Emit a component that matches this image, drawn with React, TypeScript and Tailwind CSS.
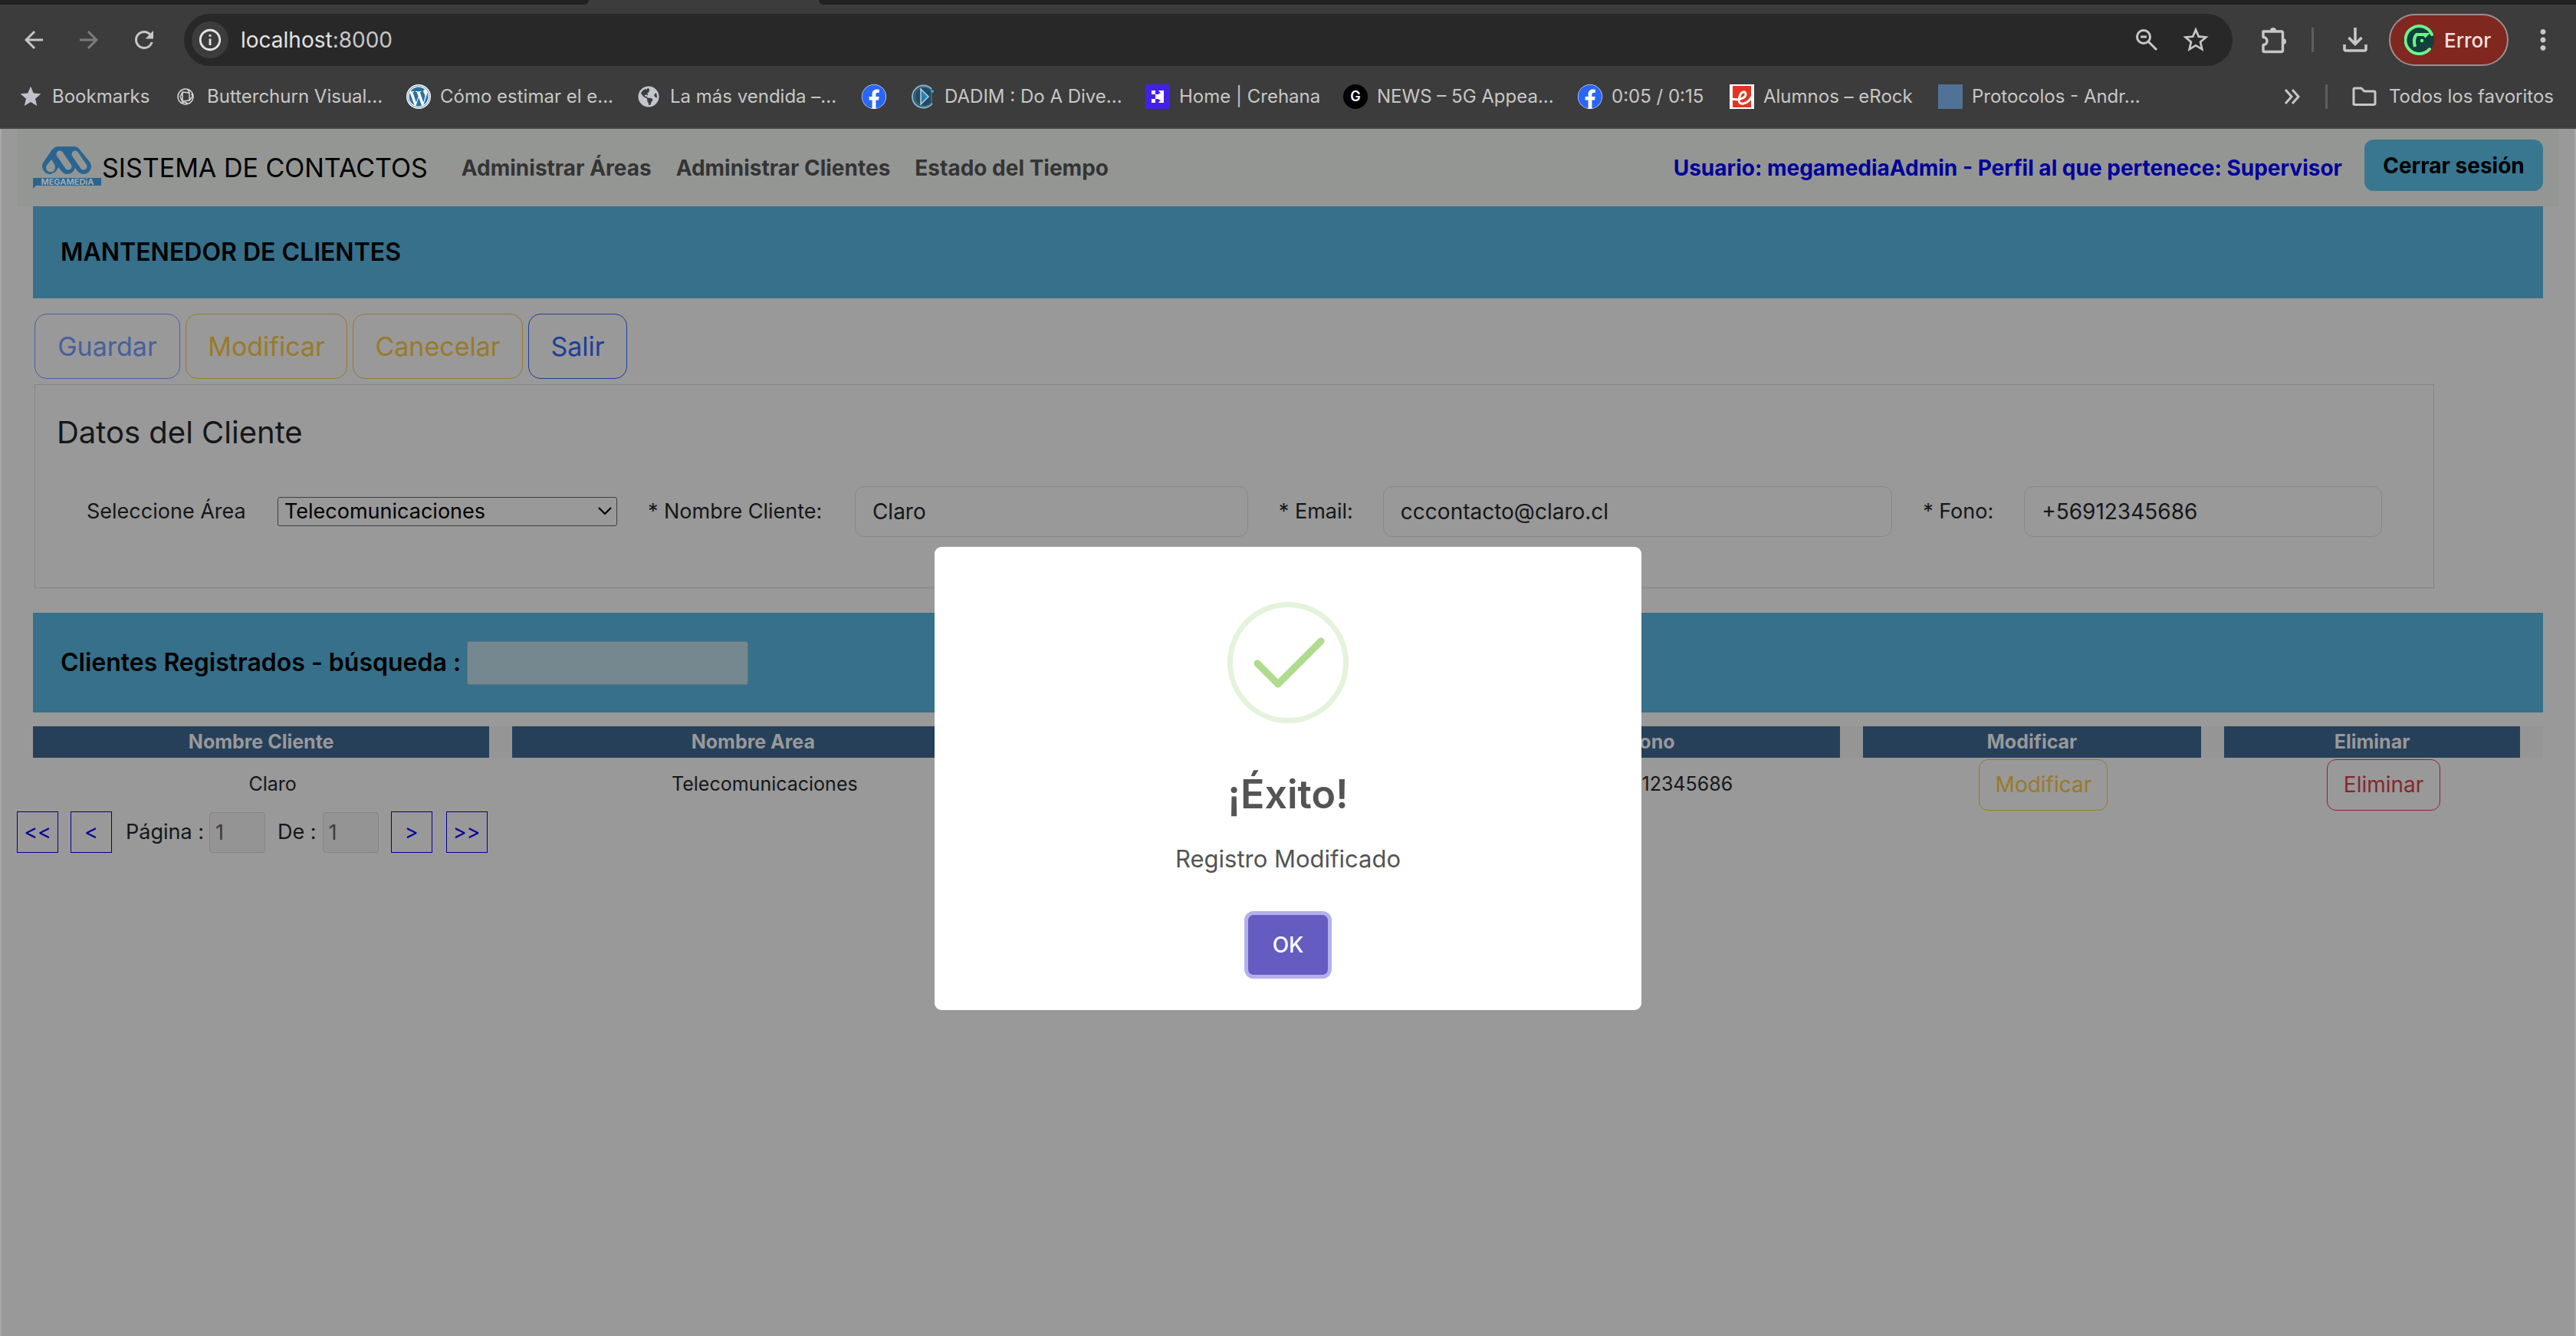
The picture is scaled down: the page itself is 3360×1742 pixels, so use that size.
import React from "react";
import { MdArrowBack, MdArrowForward, MdRefresh, MdInfoOutline, MdStar, MdStarBorder, MdMoreVert } from "react-icons/md";
import { FaFacebook, FaGlobeAmericas, FaWordpress } from "react-icons/fa";

function ZoomOutIcon() {
  return (
    <svg viewBox="0 0 32 32" className="size-8" fill="none" stroke="#c7c7c7" strokeWidth="3">
      <circle cx="12" cy="12" r="8.5" />
      <path d="M8 12h8M18.5 18.5 29 29" />
    </svg>
  );
}

function PuzzleIcon() {
  return (
    <svg viewBox="0 0 36 36" className="size-9" fill="none" stroke="#c7c7c7" strokeWidth="3.4" strokeLinejoin="round">
      <path d="M4 7h24a1.500 1.500 0 0 1 1.500 1.500V32a1.500 1.500 0 0 1-1.500 1.500H5.500A1.500 1.500 0 0 1 4 32v-7.500c3 0 5-2 5-5s-2-5-5-5z" />
      <path d="M13 6a4 4 0 0 1 8 0zM30 16a4 4 0 0 1 0 8z" fill="#c7c7c7" stroke="none" />
    </svg>
  );
}

function DownloadIcon() {
  return (
    <svg viewBox="0 0 32 32" className="size-8" fill="none" stroke="#c7c7c7" strokeWidth="3.6">
      <path d="M16 0v21M7.500 13l8.500 8.500L24.500 13M2 22v6a2 2 0 0 0 2 2h24a2 2 0 0 0 2-2v-6" />
    </svg>
  );
}

function FolderIcon() {
  return (
    <svg viewBox="0 0 32 32" className="size-8" fill="none" stroke="#c7c7c7" strokeWidth="3" strokeLinejoin="round">
      <path d="M2 26V6.500A1.500 1.500 0 0 1 3.500 5H12l4 4h12.500A1.500 1.500 0 0 1 30 10.500V25a1.500 1.500 0 0 1-1.500 1.500H3.500A1.500 1.500 0 0 1 2 25z" />
    </svg>
  );
}

function ProfileIcon() {
  return (
    <svg viewBox="0 0 40 40" className="size-10" fill="none">
      <circle cx="20" cy="20" r="19" fill="#12403c" />
      <path d="M36 13A18 18 0 1 0 33 32" stroke="#6bf58b" strokeWidth="4" strokeLinecap="round" />
      <path d="M14 29c-2-8-1-13 2-16h13l-3 3" stroke="#6bf58b" strokeWidth="4" />
      <circle cx="23" cy="21" r="2.200" fill="#6bf58b" />
    </svg>
  );
}

function KnotIcon() {
  return (
    <svg viewBox="0 0 32 32" className="size-8" fill="none" stroke="#d8d8d8" strokeWidth="1.500">
      <circle cx="16" cy="16" r="10" />
      <path d="M12 10l9 1v10l-9 1zM12 10l-3 6 4 9M21 11l-2-4M21 21l4-5-1-4M12 22l7 3" />
    </svg>
  );
}

function PlayIcon() {
  return (
    <svg viewBox="0 0 32 32" className="size-8" fill="none">
      <path d="M28 25A14.500 14.500 0 1 1 27 6" stroke="#7fb6d8" strokeWidth="2" />
      <path d="M27 24A12.500 12.500 0 1 1 27 8z" fill="#254a60" stroke="#4c87ab" strokeWidth="1" />
      <path d="M13 6v20l10-10z" fill="#2d7fb0" stroke="#a6d4ee" strokeWidth="1.500" />
      <circle cx="28" cy="9" r="2" fill="#3b9fe0" />
    </svg>
  );
}

function CrehanaIcon() {
  return (
    <svg viewBox="0 0 32 32" className="size-8">
      <path d="M0 0h32v32H0z" fill="#4321e6" />
      <path d="M8 8h5v5h4V8h7v16h-7v-5h-4v5H8v-5h5v-6H8z" fill="#fff" />
      <path d="M17 8l3 4h-3zM17 24l3-4h-3z" fill="#4321e6" />
    </svg>
  );
}

function Facebook() {
  return (
    <span className="flex size-8 items-center justify-center rounded-full bg-white">
      <FaFacebook className="size-8 text-[#2a66f6]" />
    </span>
  );
}

const bookmarks: { name: string; label: string; width: string; icon: React.ReactNode }[] = [
  { name: "bookmarks", label: "Bookmarks", width: "w-[158px]", icon: <MdStar className="size-8 text-[#bfc2cb]" /> },
  { name: "butterchurn", label: "Butterchurn Visual...", width: "w-[260px]", icon: <KnotIcon /> },
  {
    name: "wordpress",
    label: "Cómo estimar el e...",
    width: "w-[256px]",
    icon: (
      <span className="flex size-8 items-center justify-center rounded-full bg-white">
        <FaWordpress className="size-[30px] text-[#2a719f]" />
      </span>
    ),
  },
  {
    name: "vendida",
    label: "La más vendida –...",
    width: "w-[250px]",
    icon: (
      <span className="flex size-8 items-center justify-center">
        <FaGlobeAmericas className="size-7 text-[#c2c5cd]" />
      </span>
    ),
  },
  { name: "facebook", label: "", width: "w-[20px]", icon: <Facebook /> },
  { name: "dadim", label: "DADIM : Do A Dive...", width: "w-[262px]", icon: <PlayIcon /> },
  { name: "crehana", label: "Home | Crehana", width: "w-[214px]", icon: <CrehanaIcon /> },
  {
    name: "news",
    label: "NEWS – 5G Appea...",
    width: "w-[262px]",
    icon: <span className="flex size-8 items-center justify-center rounded-full bg-black text-[18px] font-semibold text-white">G</span>,
  },
  { name: "video", label: "0:05 / 0:15", width: "w-[154px]", icon: <Facebook /> },
  {
    name: "erock",
    label: "Alumnos – eRock",
    width: "w-[228px]",
    icon: (
      <svg viewBox="0 0 32 32" className="size-8">
        <path d="M0 0h32v32H0z" fill="#fff" />
        <path d="M4 2h24v28H4z" fill="#e5331f" />
        <path d="M3 19c9 2 18-1 18-6s-6-4-8 3 0 10 5 9 9-5 11-9" fill="none" stroke="#fff" strokeWidth="3" />
      </svg>
    ),
  },
  { name: "protocolos", label: "Protocolos - Andr...", width: "w-[260px]", icon: <span className="size-8 bg-[#527196]" /> },
];

function Browser() {
  return (
    <div className="border-b-2 border-[#454746] bg-[#3c3c3c] text-[#c7c7c7]">
      <div className="flex h-[6px]">
        <div className="w-[768px] rounded-br-lg bg-[#202221]" />
        <div className="ml-[300px] flex-1 rounded-bl-lg bg-[#202221]" />
      </div>
      <div className="flex h-[92px] items-center pr-[22px] pl-[26px]">
        <button aria-label="Atrás" className="mr-9"><MdArrowBack className="size-9" /></button>
        <button aria-label="Adelante" className="mr-9"><MdArrowForward className="size-9 text-[#7c7c7c]" /></button>
        <button aria-label="Recargar" className="mr-[34px]"><MdRefresh className="size-9" /></button>
        <div className="flex h-[68px] flex-1 items-center rounded-full bg-[#282828] pr-7 pl-[10px]">
          <button aria-label="Información del sitio" className="mr-4 flex size-12 items-center justify-center rounded-full bg-[#3c3c3c]">
            <MdInfoOutline className="size-[34px] text-[#e3e3e3]" />
          </button>
          <a href="#url" className="flex-1 text-[28px] leading-9">
            <span className="text-[#e3e3e3]">localhost</span>:8000
          </a>
          <button aria-label="Zoom" className="mr-7"><ZoomOutIcon /></button>
          <button aria-label="Favorito"><MdStarBorder className="size-10" /></button>
        </div>
        <div className="flex items-center pl-9">
          <button aria-label="Extensiones" className="mr-[31px]"><PuzzleIcon /></button>
          <div className="mr-[38px] h-8 w-[3px] bg-[#5e5e5e]" />
          <button aria-label="Descargas" className="mr-7"><DownloadIcon /></button>
          <button className="mr-6 flex h-[68px] w-[156px] items-center gap-3 rounded-full border-2 border-[#9c8f8d] bg-[#802720] pl-[18px] text-[26px] font-medium text-[#f7dfdc]">
            <ProfileIcon />
            Error
          </button>
          <button aria-label="Menú"><MdMoreVert className="size-[42px]" /></button>
        </div>
      </div>
      <nav className="flex h-[68px] items-center pr-[29px] pb-3 pl-6 text-[24px] leading-8 whitespace-nowrap">
        {bookmarks.map((b) => (
          <a key={b.name} href={"#" + b.name} aria-label={b.name} className="flex items-center gap-3">
            {b.icon}
            <span className={b.width}>{b.label}</span>
          </a>
        ))}
        <button aria-label="Más favoritos" className="ml-auto">
          <svg viewBox="0 0 22 22" className="size-[22px]" fill="none" stroke="#c7c7c7" strokeWidth="3">
            <path d="M2 2l8 9-8 9M11 2l8 9-8 9" />
          </svg>
        </button>
        <div className="mr-8 ml-8 h-8 w-[3px] bg-[#5e5e5e]" />
        <a href="#todos" className="flex items-center gap-4">
          <FolderIcon />
          Todos los favoritos
        </a>
      </nav>
    </div>
  );
}

function Logo() {
  return (
    <svg viewBox="0 0 90 56" className="h-14 w-[90px]" fill="none" strokeLinecap="round" strokeLinejoin="round">
      <path d="M22 26 33 10 45 26M53 10 66 26M33 10h20" stroke="#2a6591" strokeWidth="20" />
      <path d="M35 10 46 26M55 10 66 26" stroke="#949694" strokeWidth="9" />
      <path d="M24 17c4 6 5 8 5 10a6 6 0 0 1-12 1c0-3 3-6 7-11z" fill="#949694" />
      <path d="M0 41h89v10H4l-4 4z" fill="#2a6591" />
      <text x="45" y="50" textAnchor="middle" fontSize="11" fontWeight="700" fill="#a4acaf">MEGAMEDiA</text>
    </svg>
  );
}

function Header() {
  return (
    <header className="mx-5 flex h-[101px] items-center bg-[#949694] pr-[21px] pl-[21px] whitespace-nowrap">
      <a href="#inicio" className="flex items-center text-[34px] text-black">
        <Logo />
        SISTEMA DE CONTACTOS
      </a>
      <nav className="ml-11 flex gap-8 text-[28px] font-bold text-[#343434]">
        <a href="#areas">Administrar Áreas</a>
        <a href="#clientes">Administrar Clientes</a>
        <a href="#tiempo">Estado del Tiempo</a>
      </nav>
      <span className="ml-auto text-[28px] font-bold text-[#00009a]">
        Usuario: megamediaAdmin - Perfil al que pertenece: Supervisor
      </span>
      <button className="mb-[6px] ml-[29px] h-[67px] w-[233px] rounded-xl bg-[#397790] text-[28px] font-bold text-black">
        Cerrar sesión
      </button>
    </header>
  );
}

const inputStyle = "h-[66px] min-w-0 rounded-xl border border-[#888888] bg-[#999999] px-[22px] text-[28px] text-[#151719]";

function ClientForm() {
  return (
    <form className="mr-[142px] ml-[2px] mt-[7px] h-[266px] border border-[#858585] pt-9">
      <h2 className="pl-7 text-[40px] leading-[52px] text-[#151719]">Datos del Cliente</h2>
      <div className="mt-11 flex items-center gap-10 px-[67px] text-[27px] whitespace-nowrap text-[#151719]">
        <label htmlFor="area" className="w-[209px]">Seleccione Área</label>
        <div className="relative flex-[442]">
          <select id="area" className="h-[38px] w-full appearance-none rounded-[3px] border border-[#3f3f3f] bg-[#999999] pl-2 text-[27px] leading-8 text-black">
            <option>Telecomunicaciones</option>
          </select>
          <svg viewBox="0 0 18 12" className="pointer-events-none absolute top-[14px] right-[7px] h-3 w-[18px]" fill="none" stroke="#000" strokeWidth="2.200">
            <path d="M1 1l8 8 8-8" />
          </svg>
        </div>
        <label htmlFor="nombre" className="w-[230px]">* Nombre Cliente:</label>
        <input id="nombre" defaultValue="Claro" className={inputStyle + " flex-[466]"} />
        <label htmlFor="email" className="w-[96px]">* Email:</label>
        <input id="email" defaultValue="cccontacto@claro.cl" className={inputStyle + " flex-[617]"} />
        <label htmlFor="fono" className="w-[92px]">* Fono:</label>
        <input id="fono" defaultValue="+56912345686" className={inputStyle + " flex-[420]"} />
      </div>
    </form>
  );
}

const columns = [
  { title: "Nombre Cliente", width: "w-[19.1%]" },
  { title: "Nombre Area", width: "w-[20.1%]" },
  { title: "Email", width: "w-[17.8%]" },
  { title: "Fono", width: "w-[15.9%]" },
  { title: "Modificar", width: "w-[14.4%]" },
  { title: "Eliminar", width: "w-[12.7%]" },
];

function ClientTable() {
  return (
    <table className="mt-[18px] w-full table-fixed border-collapse text-center text-[25px] text-[#151719]">
      <thead>
        <tr className="bg-[#959595]">
          {columns.map((c) => (
            <th key={c.title} scope="col" className={"p-0 " + c.width}>
              <div className="mr-[30px] h-[41px] bg-[#27405a] leading-[41px] font-bold text-[#999999]">{c.title}</div>
            </th>
          ))}
        </tr>
      </thead>
      <tbody>
        <tr className="h-[70px]">
          <td>Claro</td>
          <td>Telecomunicaciones</td>
          <td />
          <td>+56912345686</td>
          <td>
            <button className="h-[67px] w-[168px] rounded-xl border border-[#997a2a] text-[28px] text-[#997a2a]">Modificar</button>
          </td>
          <td>
            <button className="h-[67px] w-[148px] rounded-xl border border-[#84272f] text-[28px] text-[#84272f]">Eliminar</button>
          </td>
        </tr>
      </tbody>
    </table>
  );
}

const pageButton = "h-[54px] w-[54px] border border-[#00009a] text-[27px] leading-8 text-[#00009a]";
const pageInput = "h-[53px] w-[73px] rounded border border-[#858585] bg-[#949494] px-[7px] text-[27px] text-[#3b3b3b]";

function Pagination() {
  return (
    <div className="ml-5 flex items-center text-[27px] text-[#151719]">
      <button className={pageButton + " mr-4"}>&lt;&lt;</button>
      <button className={pageButton + " mr-[18px]"}>&lt;</button>
      <label htmlFor="pagina" className="mr-[7px]">Página :</label>
      <input id="pagina" defaultValue="1" disabled className={pageInput + " mr-4"} />
      <label htmlFor="total" className="mr-2">De :</label>
      <input id="total" defaultValue="1" disabled className={pageInput + " mr-4"} />
      <button className={pageButton + " mr-[18px]"}>&gt;</button>
      <button className={pageButton}>&gt;&gt;</button>
    </div>
  );
}

function Modal() {
  return (
    <div className="absolute inset-0 flex items-start justify-center pt-[545px]">
      <div role="dialog" aria-labelledby="modal-title" className="flex w-[922px] flex-col items-center rounded-[9px] bg-white pt-[72px] pb-[46px]">
        <svg viewBox="0 0 158 158" className="size-[158px]" fill="none">
          <circle cx="79" cy="79" r="75.500" stroke="#e4f3db" strokeWidth="7" />
          <path d="M39 80l27 27 56-56" stroke="#afdb8d" strokeWidth="9" strokeLinecap="round" strokeLinejoin="round" />
        </svg>
        <h2 id="modal-title" className="mt-[61px] text-[52px] leading-[64px] font-semibold text-[#545454]">¡Éxito!</h2>
        <p className="mt-[30px] text-[31px] leading-[44px] text-[#545454]">Registro Modificado</p>
        <button className="mt-[51px] h-[78px] w-[104px] rounded-[7px] bg-[#645cc1] text-[28px] font-medium text-white ring-5 ring-[#b4b0eb]">OK</button>
      </div>
    </div>
  );
}

const toolButton = "h-[85px] rounded-2xl border text-[34px]";

export default function App() {
  return (
    <div className="flex min-h-screen flex-col bg-[#999999] font-['Inter','Liberation_Sans',sans-serif]">
      <Browser />
      <main className="relative flex-1 border-x-2 border-[#a8a8a8]">
        <Header />
        <div className="mx-[41px]">
          <h1 className="h-[120px] bg-[#37708a] px-9 text-[32px] leading-[120px] font-semibold text-black">MANTENEDOR DE CLIENTES</h1>
          <div className="mt-5 ml-[2px] flex gap-[7px]">
            <button className={toolButton + " w-[190px] border-[#47609d] text-[#47609d]"}>Guardar</button>
            <button className={toolButton + " w-[211px] border-[#997a2a] text-[#997a2a]"}>Modificar</button>
            <button className={toolButton + " w-[222px] border-[#997a2a] text-[#997a2a]"}>Canecelar</button>
            <button className={toolButton + " w-[129px] border-[#1a3f98] text-[#1a3f98]"}>Salir</button>
          </div>
          <ClientForm />
          <div className="mt-8 flex h-[130px] items-center gap-2 bg-[#37708a] px-9 text-[32px] font-semibold text-black">
            <label htmlFor="busqueda">Clientes Registrados - búsqueda :</label>
            <input id="busqueda" className="h-[57px] w-[367px] rounded-[3px] border border-[#5b7480] bg-[#76888f] px-2" />
          </div>
          <ClientTable />
        </div>
        <Pagination />
        <Modal />
      </main>
    </div>
  );
}
